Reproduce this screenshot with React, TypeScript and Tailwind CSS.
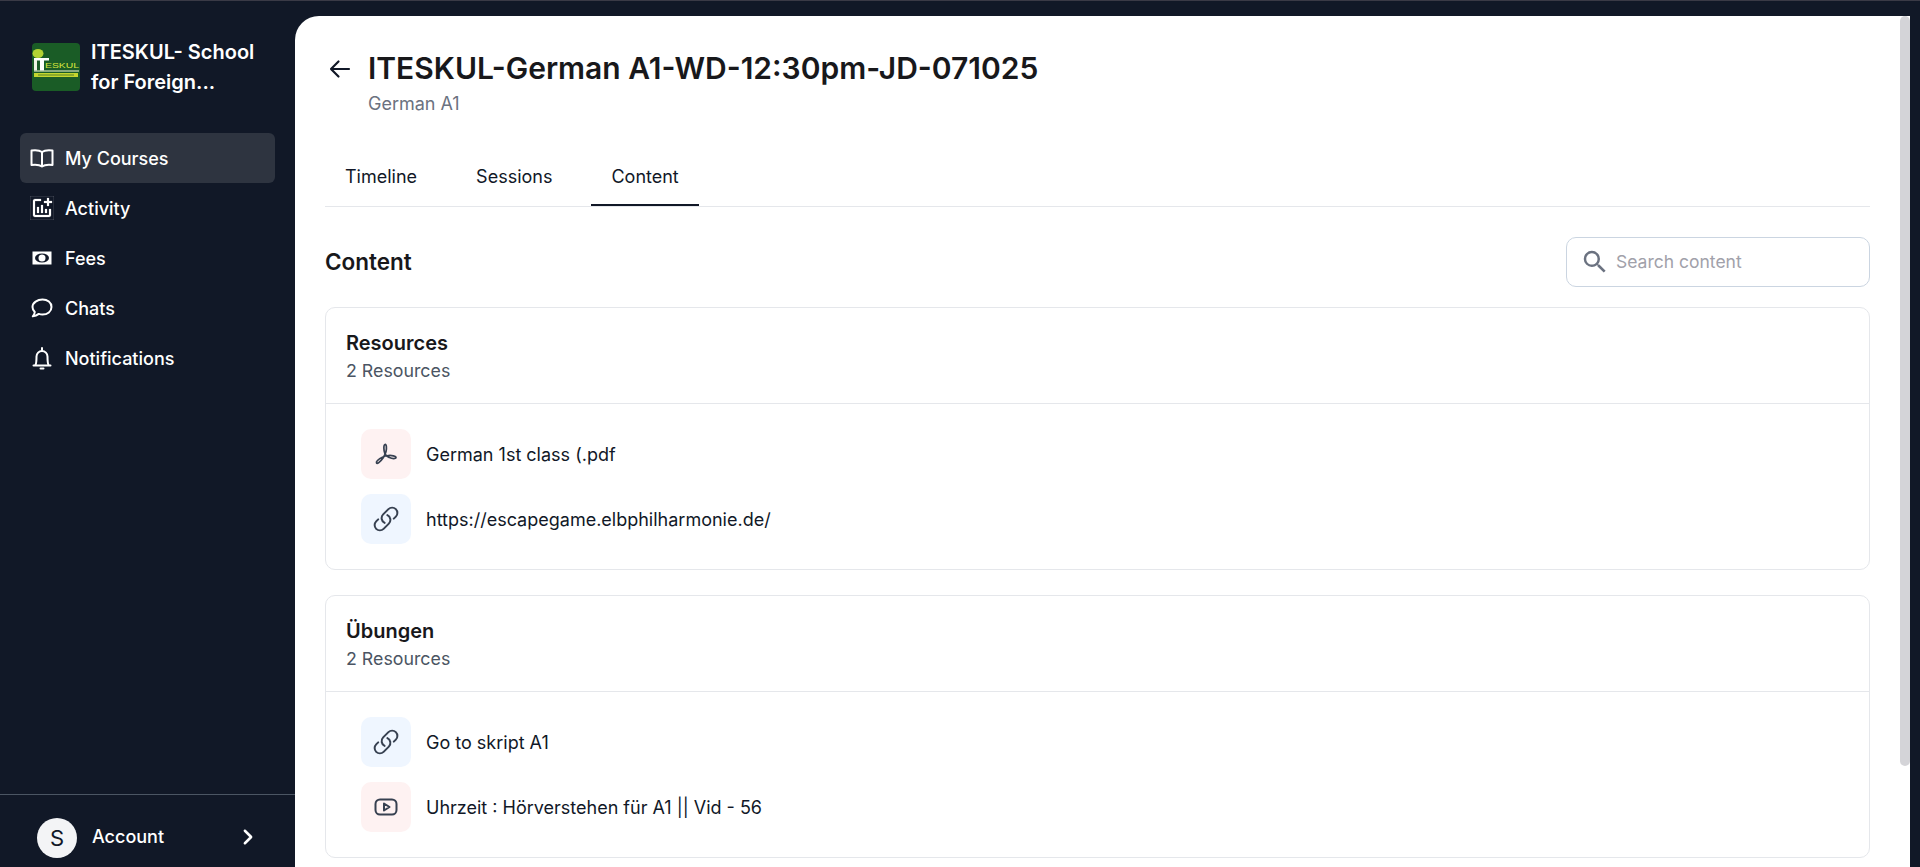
import { HiOutlineLink, HiOutlineArrowLeft, HiOutlineChevronRight } from "react-icons/hi2";
import { MdOutlineAddchart, MdSearch } from "react-icons/md";
import type { ReactNode, SVGProps } from "react";

function Logo() {
  return (
    <svg width="48" height="48" viewBox="0 0 48 48" className="shrink-0 rounded-[4px]">
      <rect width="48" height="48" fill="#1a5c26" />
      <ellipse cx="6" cy="10.500" rx="5.500" ry="4.500" fill="#b4d334" />
      <rect x="2" y="15" width="15" height="2.500" fill="#fff" />
      <rect x="8" y="17" width="4" height="10.500" fill="#fff" />
      <rect x="2" y="17" width="3" height="10.500" fill="#eef5e4" />
      <text x="13" y="24.500" fontSize="7" fill="#d7e63c" fontFamily="'Liberation Sans', sans-serif" textLength="34" lengthAdjust="spacingAndGlyphs">ESKUL</text>
      <rect x="2" y="27.500" width="45" height="1" fill="#f3f7d8" />
      <rect x="2" y="30" width="44" height="4" fill="#c4d62e" />
      <rect x="6" y="31.500" width="36" height="1" fill="#56802a" />
    </svg>
  );
}

function BookIcon(props: SVGProps<SVGSVGElement>) {
  return (
    <svg viewBox="0 0 24 24" fill="none" stroke="currentColor" strokeWidth="2" strokeLinejoin="round" {...props}>
      <path d="M12 6C10 4.500 6 4 1.500 4.500V19C6 18.500 10 19 12 20.500C14 19 18 18.500 22.500 19V4.500C18 4 14 4.500 12 6Z" />
      <path d="M12 6V20.500" />
    </svg>
  );
}

function FeesIcon(props: SVGProps<SVGSVGElement>) {
  return (
    <svg viewBox="0 0 24 24" fill="none" {...props}>
      <rect x="2.500" y="5.500" width="19" height="13" fill="currentColor" />
      <ellipse cx="12" cy="12" rx="7" ry="4.500" fill="#111827" />
      <ellipse cx="12" cy="12" rx="3.500" ry="3.500" fill="currentColor" />
    </svg>
  );
}

function ChatIcon(props: SVGProps<SVGSVGElement>) {
  return (
    <svg viewBox="0 0 24 24" fill="none" stroke="currentColor" strokeWidth="2" strokeLinejoin="round" {...props}>
      <path d="M12.500 3.500c5 0 9 3 9 7.500s-4 7.500-9 7.500c-1.300 0-2.600-.2-3.700-.6-1.600 1.300-3.600 2.200-6 2.400 1.100-1.300 1.800-2.700 2-4.300C3.300 14.600 2.500 12.900 2.500 11c0-4.500 5-7.500 10-7.500Z" />
    </svg>
  );
}

function BellIcon(props: SVGProps<SVGSVGElement>) {
  return (
    <svg viewBox="0 0 24 24" fill="none" stroke="currentColor" strokeWidth="2" strokeLinecap="round" strokeLinejoin="round" {...props}>
      <path d="M5.500 19C6.500 17 6.500 13.500 6.500 10.500A5.500 5.500 0 0 1 17.500 10.500C17.500 13.500 17.500 17 18.500 19" />
      <path d="M3.500 19.500H20.500" />
      <path d="M12 2V4" />
      <path d="M10.500 22.500H13.500" />
    </svg>
  );
}

function AcrobatIcon(props: SVGProps<SVGSVGElement>) {
  return (
    <svg viewBox="0 0 24 24" fill="none" stroke="currentColor" strokeWidth="1.700" strokeLinejoin="round" {...props}>
      <path d="M11 12C9.500 8 9.500 3 11 2.500C12.500 2 12.800 6 12 9.500C11 13.500 8 18 4.500 20.800C2.500 22.200 1.500 20.500 3.500 18.500C6 16 10 14 14.500 13.500C17.500 13.200 22 14 22 15.500C22 17 18 16.800 15.500 15.500C13.500 14.500 12 14 11 12Z" />
    </svg>
  );
}

function VideoIcon(props: SVGProps<SVGSVGElement>) {
  return (
    <svg viewBox="0 0 24 24" fill="none" stroke="currentColor" strokeWidth="2" strokeLinejoin="round" {...props}>
      <rect x="1.500" y="4.500" width="21" height="15" rx="4.500" />
      <path d="M10 8.500L15.500 12L10 15.500Z" />
    </svg>
  );
}

const nav = [
  { label: "My Courses", icon: <BookIcon className="h-6 w-6 shrink-0" />, active: true },
  { label: "Activity", icon: <MdOutlineAddchart className="h-6 w-6 shrink-0" stroke="currentColor" strokeWidth={0.2} /> },
  { label: "Fees", icon: <FeesIcon className="h-6 w-6 shrink-0" /> },
  { label: "Chats", icon: <ChatIcon className="h-6 w-6 shrink-0" /> },
  { label: "Notifications", icon: <BellIcon className="h-6 w-6 shrink-0" /> },
];

function Resource({ tint, icon, label }: { tint: string; icon: ReactNode; label: string }) {
  return (
    <div className="flex items-center gap-[15px]">
      <div className={`flex h-[50px] w-[50px] items-center justify-center rounded-[10px] text-[#374151] ${tint}`}>{icon}</div>
      <span className="text-[18px] text-[#111827]">{label}</span>
    </div>
  );
}

function Card({ title, children }: { title: string; children: ReactNode }) {
  return (
    <section className="rounded-[10px] border border-[#e5e7eb]">
      <div className="h-[96px] border-b border-[#e5e7eb] px-5 pt-[20px]">
        <h3 className="text-[20px] leading-[30px] font-semibold text-[#18181b]">{title}</h3>
        <p className="text-[17.800px] leading-[26px] text-[#4b5563]">2 Resources</p>
      </div>
      <div className="flex flex-col gap-[15px] px-[35px] py-[25px]">{children}</div>
    </section>
  );
}

export default function App() {
  return (
    <div className="flex h-[867px] overflow-hidden border-t border-[#3a3a46] bg-[#111827] pr-[10px] font-['Inter',sans-serif]">
      <aside className="flex w-[295px] shrink-0 flex-col text-white">
        <div className="flex items-center gap-[11px] px-8 pt-[36px] pb-[36px]">
          <Logo />
          <div className="text-[20px] leading-[30px] font-semibold text-white">ITESKUL- School<br />for Foreign...</div>
        </div>
        <nav className="flex flex-col px-5">
          {nav.map(({ label, icon, active }) => (
            <a key={label} className={`flex h-[50px] items-center gap-[11px] rounded-[6px] px-[10px] text-[18px] font-medium ${active ? "bg-[#2e3440]" : ""}`}>
              <span className="flex w-6 shrink-0 justify-center">{icon}</span>
              {label}
            </a>
          ))}
        </nav>
        <div className="mt-auto flex h-[73px] items-center border-t border-[#4b5563] pt-[14px] pl-[37px] pr-[37px]">
          <div className="flex h-10 w-10 items-center justify-center rounded-full bg-[#f3f4f6] text-[22px] text-[#111827]">S</div>
          <span className="ml-[15px] flex-1 pb-[3px] text-[18px] font-medium">Account</span>
          <HiOutlineChevronRight className="mb-[3px] h-5 w-5" strokeWidth={3} />
        </div>
      </aside>
      <div className="mt-[15px] flex min-w-0 flex-1 overflow-hidden rounded-tl-[24px] bg-white">
        <main className="min-w-0 flex-1 pl-[30px] pr-[30px]">
          <header className="flex items-start gap-[16px] pt-[33px] pl-[3px]">
            <HiOutlineArrowLeft className="mt-[8px] h-6 w-6 text-[#111827]" strokeWidth={2.2} />
            <div>
              <h1 className="text-[30px] leading-[38px] font-semibold text-[#18181b]">ITESKUL-German A1-WD-12:30pm-JD-071025</h1>
              <p className="mt-[5px] text-[18px] leading-[24px] text-[#6b7280]">German A1</p>
            </div>
          </header>
          <div className="mt-[31px] flex h-[60px] gap-[19px] border-b border-[#e5e7eb] text-[18px] text-[#111827]">
            <button className="px-5">Timeline</button>
            <button className="px-5">Sessions</button>
            <button className="px-5 shadow-[inset_0_-2px_0_#111827]">Content</button>
          </div>
          <div className="mt-[30px] flex h-[50px] items-center justify-between">
            <h2 className="text-[22.500px] font-semibold text-[#18181b]">Content</h2>
            <div className="flex h-[50px] w-[304px] items-center gap-[6px] rounded-[10px] border border-[#cbd5e1] pl-[13px]">
              <MdSearch className="h-[30px] w-[30px] text-[#6b7280]" />
              <span className="pt-[1px] text-[17.500px] text-[#a1a1aa]">Search content</span>
            </div>
          </div>
          <div className="mt-5 flex flex-col gap-[25px]">
            <Card title="Resources">
              <Resource tint="bg-[#fef2f2]" icon={<AcrobatIcon className="h-6 w-6" />} label="German 1st class (.pdf" />
              <Resource tint="bg-[#eff6ff]" icon={<HiOutlineLink className="h-7 w-7" strokeWidth={1.7} />} label="https://escapegame.elbphilharmonie.de/" />
            </Card>
            <Card title="Übungen">
              <Resource tint="bg-[#eff6ff]" icon={<HiOutlineLink className="h-7 w-7" strokeWidth={1.7} />} label="Go to skript A1" />
              <Resource tint="bg-[#fef2f2]" icon={<VideoIcon className="h-6 w-6" />} label="Uhrzeit : Hörverstehen für A1 || Vid - 56" />
            </Card>
          </div>
        </main>
        <div className="w-[10px] shrink-0">
          <div className="h-[750px] rounded-[5px] bg-[#d4d4d8]" />
        </div>
      </div>
    </div>
  );
}
